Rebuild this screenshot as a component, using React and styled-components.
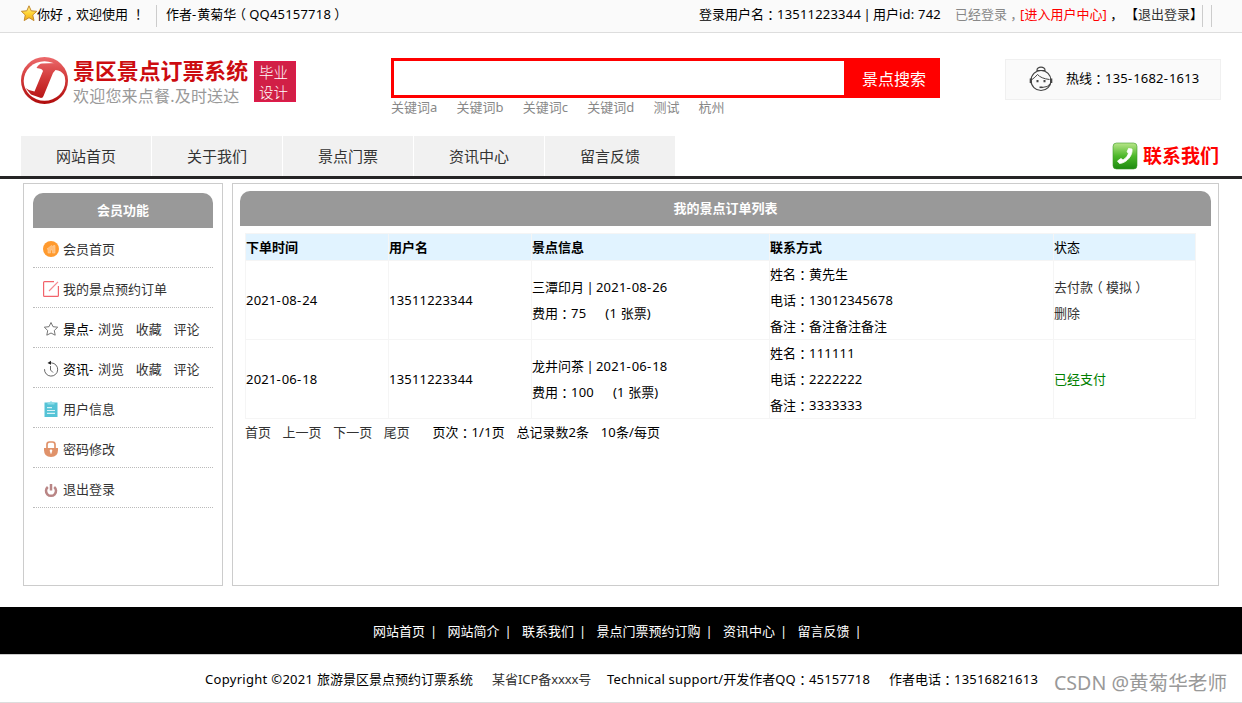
import React from "react";
import styled, {createGlobalStyle} from "styled-components";

const GlobalStyle = createGlobalStyle`
  * {
    box-sizing: border-box;
  }

  body {
    margin: 0;
    background: #fff;
    color: #000;
    font: 13px/26px "Noto Sans", "Noto Sans CJK SC", sans-serif;
  }
`;

const keywords = ["关键词a", "关键词b", "关键词c", "关键词d", "测试", "杭州"];
const navItems = ["网站首页", "关于我们", "景点门票", "资讯中心", "留言反馈"];
const footerItems = ["网站首页", "网站简介", "联系我们", "景点门票预约订购", "资讯中心", "留言反馈"];

const orders = [
    {
        date: "2021-08-24",
        user: "13511223344",
        spot: "三潭印月 | 2021-08-26",
        price: "费用：75",
        tickets: "(1 张票)",
        contact: ["姓名：黄先生", "电话：13012345678", "备注：备注备注备注"],
        paid: false
    },
    {
        date: "2021-06-18",
        user: "13511223344",
        spot: "龙井问茶 | 2021-06-18",
        price: "费用：100",
        tickets: "(1 张票)",
        contact: ["姓名：111111", "电话：2222222", "备注：3333333"],
        paid: true
    }
];

// Latin runs are tracked slightly wider, full width punctuation sits in the middle of its cell
function Text({children}) {
    return children.split(/([：，！（）]|[-|]|[\x20-\x2c\x2e-\x7b\x7d\x7e©]+)/).filter(Boolean).map((part, i) => {
        if (/^[：，！（）]$/.test(part)) return <Punctuation key={i}>{part}</Punctuation>;
        if (part === "-") return <Latin key={i} $spacing={1}>{part}</Latin>;
        if (part === "|") return <Bar key={i}>{part}</Bar>;
        if (/^[\x20-\x7e©]+$/.test(part)) return <Latin key={i}>{part}</Latin>;
        return <React.Fragment key={i}>{part}</React.Fragment>;
    });
}

const App = () => {
    return <Page>
        <GlobalStyle/>
        <TopBar>
            <StarIcon/>
            <Greeting><Text>你好，欢迎使用 ！</Text></Greeting>
            <TopDivider/>
            <Author><Text>作者-黄菊华（QQ45157718）</Text></Author>
            <TopRight>
                <LoginInfo><Text>登录用户名：13511223344 | 用户id: 742</Text></LoginInfo>
                <LoginState><Text>已经登录，</Text></LoginState>
                <CenterLink><Text>[进入用户中心]</Text></CenterLink>
                <Comma><Text>，</Text></Comma>
                <Logout>【<span>退出登录</span>】</Logout>
                <TopDivider/>
                <TopDivider/>
            </TopRight>
        </TopBar>
        <Header>
            <LogoIcon/>
            <Brand>
                <BrandTitle>景区景点订票系统</BrandTitle>
                <BrandSub>欢迎您来点餐.及时送达</BrandSub>
            </Brand>
            <Badge>毕业<br/>设计</Badge>
            <Search>
                <SearchBox>
                    <SearchInput/>
                    <SearchButton>景点搜索</SearchButton>
                </SearchBox>
                <Keywords>
                    {keywords.map(k => <span key={k}><Text>{k}</Text></span>)}
                </Keywords>
            </Search>
            <Hotline>
                <OperatorIcon/>
                <HotlineText><Text>热线：135-1682-1613</Text></HotlineText>
            </Hotline>
        </Header>
        <Nav>
            {navItems.map(item => <NavItem key={item}>{item}</NavItem>)}
            <Contact>
                <PhoneIcon/>
                联系我们
            </Contact>
        </Nav>
        <Main>
            <Sidebar>
                <PanelTitle>会员功能</PanelTitle>
                <MenuRow><HomeIcon/><a>会员首页</a></MenuRow>
                <MenuRow><EditIcon/><a>我的景点预约订单</a></MenuRow>
                <MenuRow><FavIcon/><b><Text>景点-</Text></b><a>浏览</a><a>收藏</a><a>评论</a></MenuRow>
                <MenuRow><ClockIcon/><b><Text>资讯-</Text></b><a>浏览</a><a>收藏</a><a>评论</a></MenuRow>
                <MenuRow><ClipboardIcon/><a>用户信息</a></MenuRow>
                <MenuRow><LockIcon/><a>密码修改</a></MenuRow>
                <MenuRow><PowerIcon/><a>退出登录</a></MenuRow>
            </Sidebar>
            <Content>
                <PanelTitle>我的景点订单列表</PanelTitle>
                <OrderTable>
                    <colgroup>
                        <Col $width={143}/>
                        <Col $width={143}/>
                        <Col $width={238}/>
                        <Col $width={284}/>
                        <Col $width={142}/>
                    </colgroup>
                    <thead>
                    <tr>
                        <Th>下单时间</Th>
                        <Th>用户名</Th>
                        <Th>景点信息</Th>
                        <Th>联系方式</Th>
                        <Th $plain>状态</Th>
                    </tr>
                    </thead>
                    <tbody>
                    {orders.map(order => <tr key={order.date}>
                        <Td><Text>{order.date}</Text></Td>
                        <Td><Text>{order.user}</Text></Td>
                        <Td>
                            <div><Text>{order.spot}</Text></div>
                            <div><Text>{order.price}</Text><Tickets><Text>{order.tickets}</Text></Tickets></div>
                        </Td>
                        <Td>{order.contact.map(line => <div key={line}><Text>{line}</Text></div>)}</Td>
                        <Td>
                            {order.paid
                                ? <Paid>已经支付</Paid>
                                : <Action><Text>去付款（模拟）</Text><br/>删除</Action>}
                        </Td>
                    </tr>)}
                    </tbody>
                </OrderTable>
                <Pager>
                    <a>首页</a>
                    <a>上一页</a>
                    <a>下一页</a>
                    <a>尾页</a>
                    <PageNo><Text>页次：1/1页</Text></PageNo>
                    <span><Text>总记录数2条</Text></span>
                    <span><Text>10条/每页</Text></span>
                </Pager>
            </Content>
        </Main>
        <FooterNav>
            {footerItems.map(item => <FooterItem key={item}>{item}<i>|</i></FooterItem>)}
        </FooterNav>
        <Copyright>
            <Site><Text>Copyright ©2021 旅游景区景点预约订票系统</Text></Site>
            <Icp><Text>某省ICP备xxxx号</Text></Icp>
            <Support><Text>Technical support/开发作者QQ：45157718</Text></Support>
            <span><Text>作者电话：13516821613</Text></span>
            <Watermark>CSDN @黄菊华老师</Watermark>
        </Copyright>
    </Page>;
}

const StarIcon = () => <svg width="17" height="17" viewBox="0 0 17 17">
    <defs>
        <linearGradient id="gold" x1="0" y1="0" x2="0" y2="1">
            <stop offset="0" stopColor="#fff0a0"/>
            <stop offset=".5" stopColor="#ffd535"/>
            <stop offset="1" stopColor="#f0a818"/>
        </linearGradient>
    </defs>
    <path d="M8 .8 L10.2 5.8 L15.8 6.3 L11.7 10 L13 15.6 L8 12.7 L3.2 15.6 L4.3 10 L.4 6.3 L5.8 5.8Z"
          fill="url(#gold)" stroke="#c48b2c" strokeWidth="1" strokeLinejoin="round"/>
</svg>;

const LogoIcon = () => <svg width="48" height="48" viewBox="0 0 48 48">
    <defs>
        <linearGradient id="logoRed" gradientUnits="userSpaceOnUse" x1="0" y1="0" x2="0" y2="47">
            <stop offset="0" stopColor="#ec6a6c"/>
            <stop offset=".45" stopColor="#d23a3a"/>
            <stop offset="1" stopColor="#b00c0c"/>
        </linearGradient>
    </defs>
    <circle cx="23.5" cy="23.5" r="23.5" fill="url(#logoRed)"/>
    <ellipse cx="23.5" cy="24" rx="20.8" ry="19.8" fill="#fff"/>
    <path d="M15.500 11 Q18 6.500 21 6.500 L36 6 L43 13 L44 19 Q40 13 34.500 13 L32 16 L22.500 39
        Q22 41 20 41 L10 37.500 L4.500 31 Q8 34 13.500 34.500 L22 14 Q21.500 11.500 15.500 11Z" fill="url(#logoRed)"/>
</svg>;

const OperatorIcon = () => <svg width="24" height="28" viewBox="0 0 24 28" fill="none" stroke="#444">
    <circle cx="12" cy="15.500" r="10" strokeWidth="1.200"/>
    <path d="M8 5.500 C7.500 1 16.500 1 16 5.500Z" strokeWidth="1.200"/>
    <path d="M3 14.500 Q6 12.500 8.500 9.500 Q12 13.500 20.500 14.500" strokeWidth="1"/>
    <path d="M1.800 13.500v4.500M22.200 13.500v4.500" strokeWidth="2.200"/>
    <path d="M8.500 15v2.200M15.500 15v2.200" strokeWidth="2"/>
    <path d="M21.500 18.500 Q19 22.500 13 22.500" strokeWidth="1"/>
    <path d="M10.500 22.300h3" strokeWidth="1.600"/>
</svg>;

const PhoneIcon = () => <svg width="26" height="28" viewBox="0 0 26 28">
    <defs>
        <linearGradient id="green" x1="0" y1="0" x2="0" y2="1">
            <stop offset="0" stopColor="#b9e68a"/>
            <stop offset=".5" stopColor="#4db82a"/>
            <stop offset="1" stopColor="#1d8a10"/>
        </linearGradient>
    </defs>
    <rect x="1" y="1" width="24" height="26" rx="3.500" fill="url(#green)" stroke="#3c9a2a" strokeWidth=".6"/>
    <path d="M16.500 6.500 L20 7 C21 13 15 21 7.500 21.500 L5.500 19 L9 16.500 L11 18
        C14 16 16 13.500 16.500 11 L15 10Z" fill="#fff" stroke="#fff" strokeWidth=".8" strokeLinejoin="round"/>
</svg>;

const HomeIcon = () => <svg width="16" height="16" viewBox="0 0 16 16">
    <circle cx="8" cy="8" r="8" fill="#ff9a2e"/>
    <path d="M4 8 L8.500 4.500 L10.500 6 V4.500 H12 V12 H9.500 V9 H7.500 V12 H5 V8Z" fill="#ffbd78" stroke="#ffd0a0" strokeWidth=".6"/>
</svg>;

const EditIcon = () => <svg width="16" height="16" viewBox="0 0 16 16" fill="none" stroke="#f2636b" strokeWidth="1.200">
    <path d="M11 .7H1.500Q.6 .7 .6 1.600V14.500Q.6 15.400 1.500 15.400H14.500Q15.400 15.400 15.400 14.500V5"/>
    <path d="M6 10 L15 .8" stroke="#f48a90"/>
</svg>;

const FavIcon = () => <svg width="16" height="16" viewBox="0 0 16 16" fill="none" stroke="#666" strokeWidth=".9">
    <path d="M8 1.500 L10 5.700 L14.700 6.200 L11.300 9.500 L12.200 14.200 L8 12 L3.800 14.200 L4.700 9.500 L1.300 6.200 L6 5.700Z"
          strokeLinejoin="round"/>
</svg>;

const ClockIcon = () => <svg width="16" height="16" viewBox="0 0 16 16" fill="none" stroke="#555" strokeWidth=".9">
    <path d="M6 1.900 H8.500 A6.600 6.600 0 1 1 1.500 8.200" />
    <path d="M7.500 5 V9 L10 11.500"/>
    <path d="M4.500 1.900 L8 -.2 V3.800Z" fill="#222" stroke="none"/>
</svg>;

const ClipboardIcon = () => <svg width="16" height="16" viewBox="0 0 16 16">
    <path d="M1.500 1.500 H14.500 V16 H1.500Z" fill="#55c3d6"/>
    <path d="M4.500 3.500 V1.500 H6.500 Q8 -.8 9.500 1.500 H11.500 V3.500Z" fill="#8adbe6"/>
    <path d="M4 6.700H9M4 9.500H12M4 12.300H12" stroke="#d6f3f7" strokeWidth="1.200"/>
</svg>;

const LockIcon = () => <svg width="16" height="16" viewBox="0 0 16 16">
    <path d="M4 8 V3.500 Q4 1 6.500 1 H9.500 Q12 1 12 3.500 V8" fill="none" stroke="#e0926a" strokeWidth="1.700"/>
    <path d="M1 7 H15 V9 Q15 16 8 16 Q1 16 1 9Z" fill="#e0926a"/>
    <path d="M8 9.500 V12.500" stroke="#fff" strokeWidth="1.400"/>
    <circle cx="8" cy="9.800" r="1.300" fill="#fff"/>
</svg>;

const PowerIcon = () => <svg width="16" height="16" viewBox="0 0 16 16" fill="none" stroke="#b98585" strokeWidth="2.500">
    <path d="M4.800 6 A5 5 0 1 0 11.200 6"/>
    <path d="M8 3V9.500"/>
</svg>;

const Latin = styled.span`
  letter-spacing: ${({$spacing = 0.2}) => $spacing}px;
`;

const Bar = styled.span`
  margin-left: -1.2px;
  letter-spacing: -1.2px;
`;

const Punctuation = styled.span`
  padding: 0 3.25px;
  font-feature-settings: "halt";
`;

const Page = styled.div`
  width: 1242px;
  height: 703px;
  overflow: hidden;
  white-space: nowrap;
`;

const TopBar = styled.div`
  height: 33px;
  padding: 0 30px 0 21px;
  display: flex;
  background: #fafafa;
  border-bottom: 1px solid #ddd;
  line-height: 28px;

  > svg {
    margin-top: 5px;
    margin-right: -1px;
  }
`;

const TopDivider = styled.div`
  width: 1px;
  height: 22px;
  margin-top: 5px;
  background: #ccc;
`;

const Greeting = styled.div`
  width: 119px;
`;

const Author = styled.div`
  margin-left: 9px;
`;

const TopRight = styled.div`
  margin-left: auto;
  display: flex;

  ${TopDivider} {
    margin-left: 8px;
  }
`;

const LoginInfo = styled.div`
  width: 256px;
`;

const LoginState = styled.div`
  width: 65px;
  color: #888;
`;

const CenterLink = styled.div`
  width: 87px;
  color: #f00;
`;

const Comma = styled.div`
  width: 18px;
`;

const Logout = styled.div`
  width: 69px;

  span {
    color: #333;
  }
`;

const Header = styled.div`
  height: 103px;
  padding-left: 21px;
  display: flex;
  align-items: flex-start;

  > svg {
    margin-top: 24px;
  }
`;

const Brand = styled.div`
  width: 185px;
  padding: 25px 0 0 4px;
`;

const BrandTitle = styled.div`
  color: #cc0c10;
  font-size: 21.900px;
  font-weight: 700;
  line-height: 26px;
`;

const BrandSub = styled.div`
  color: #999;
  font-size: 16px;
  line-height: 25px;
  letter-spacing: 0.2px;
`;

const Badge = styled.div`
  width: 42px;
  height: 41px;
  margin-top: 28px;
  padding-left: 4px;
  background: #d11f46;
  border: 1px solid #e0184a;
  color: #fff;
  font-size: 14.500px;
  font-weight: 300;
  line-height: 20px;

  &::first-line {
    line-height: 16px;
  }
`;

const Search = styled.div`
  width: 549px;
  margin: 25px 0 0 95px;
`;

const SearchBox = styled.div`
  height: 40px;
  display: flex;
  border: 3px solid #f00;
`;

const SearchInput = styled.div`
  width: 450px;
  background: #fff;
`;

const SearchButton = styled.div`
  flex: 1;
  padding-left: 18px;
  background: #f00;
  color: #fff;
  font-size: 16px;
  line-height: 36px;
`;

const Keywords = styled.div`
  display: flex;
  gap: 19px;
  color: #888;
  line-height: 18px;
`;

const Hotline = styled.div`
  width: 216px;
  height: 41px;
  margin: 26px 0 0 65px;
  padding-left: 23px;
  display: flex;
  align-items: center;
  gap: 13px;
  background: #fafafa;
  border: 1px solid #f0f0f0;

  svg {
    margin-bottom: 2px;
  }
`;

const HotlineText = styled.span`
  margin-bottom: 3px;
`;

const Nav = styled.div`
  height: 43px;
  padding: 0 23px 0 21px;
  display: flex;
  gap: 1px;
  border-bottom: 3px solid #252425;
`;

const NavItem = styled.div`
  width: 130px;
  background: #f1f1f1;
  color: #333;
  font-size: 15px;
  line-height: 41px;
  text-align: center;
`;

const Contact = styled.div`
  margin-left: auto;
  display: flex;
  align-items: center;
  gap: 5px;
  color: #f00;
  font-size: 19px;
  font-weight: 700;
`;

const Main = styled.div`
  height: 428px;
  padding: 4px 23px 0;
  display: flex;
  gap: 9px;
  align-items: flex-start;
`;

const PanelTitle = styled.div`
  height: 35px;
  background: #999;
  border-radius: 10px 10px 0 0;
  color: #fff;
  font-weight: 700;
  line-height: 35px;
  text-align: center;
`;

const Sidebar = styled.div`
  width: 200px;
  height: 403px;
  padding: 9px;
  border: 1px solid #ccc;
`;

const MenuRow = styled.div`
  height: 40px;
  padding: 3px 0 0 10px;
  display: flex;
  align-items: center;
  border-bottom: 1px dotted #bbb;

  svg {
    margin-right: 4px;
    overflow: visible;
  }

  a {
    color: #333;
  }

  b {
    width: 35px;
    font-weight: 400;
  }

  a + a {
    margin-left: 11.700px;
  }
`;

const Content = styled.div`
  width: 987px;
  height: 403px;
  padding: 7px;
  border: 1px solid #ccc;
`;

const OrderTable = styled.table`
  width: 951px;
  margin: 7px 0 0 5px;
  table-layout: fixed;
  border-collapse: collapse;
`;

const Col = styled.col`
  width: ${({$width}) => $width}px;
`;

const Th = styled.th`
  height: 27px;
  padding: 0;
  background: #e1f3ff;
  border: 1px solid #f5f5f5;
  font-weight: ${({$plain}) => $plain ? 400 : 700};
  text-align: left;
`;

const Td = styled.td`
  height: 79px;
  padding: 0;
  border: 1px solid #f5f5f5;
`;

const Tickets = styled.span`
  margin-left: 19px;
`;

const Action = styled.div`
  color: #333;
`;

const Paid = styled.div`
  color: #008000;
`;

const Pager = styled.div`
  padding-left: 5px;
  display: flex;
  gap: 11.600px;

  a {
    color: #333;
  }
`;

const PageNo = styled.span`
  margin-left: 11px;
`;

const FooterNav = styled.div`
  height: 47px;
  padding-left: 373px;
  display: flex;
  background: #000;
  color: #fff;
  line-height: 48px;
`;

const FooterItem = styled.div`
  margin-right: 10.300px;

  i {
    margin-left: 5px;
    font-style: normal;
  }
`;

const Copyright = styled.div`
  position: relative;
  height: 49px;
  padding-left: 205px;
  display: flex;
  border-top: 1px solid #ccc;
  border-bottom: 1px solid #ddd;
  line-height: 48px;
`;

const Site = styled.span`
  width: 287px;

  ${Latin} {
    letter-spacing: 0.3px;
  }
`;

const Icp = styled.span`
  width: 115px;
  color: #333;

  ${Latin} {
    letter-spacing: -0.1px;
  }
`;

const Support = styled.span`
  width: 282px;
`;

const Watermark = styled.div`
  position: absolute;
  top: 4px;
  right: 15px;
  color: #999;
  font-size: 19.600px;
  text-shadow: 1px 1px 0 #fff;
`;

export default App;
